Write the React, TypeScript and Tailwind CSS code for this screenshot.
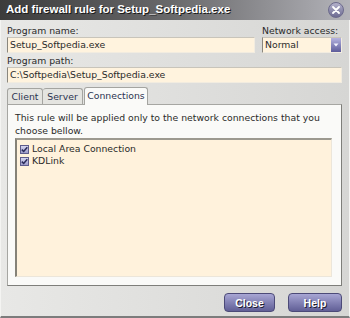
export default function App() {
  const body = { fontFamily: '"DejaVu Sans", Verdana, sans-serif' };
  const bold = { fontFamily: '"Liberation Sans", Arial, sans-serif' };

  return (
    <div
      className="flex h-[318px] w-[350px] flex-col overflow-hidden bg-gradient-to-r from-[#e8e8e6] to-[#d6d6d4] text-[9.3px] leading-[12px] text-[#2a2a2a]"
      style={body}
    >
      {/* title bar */}
      <div className="flex h-[20px] shrink-0 items-center justify-between bg-gradient-to-r from-[#3c3c3c] via-[#6a6a6c] to-[#b4b4ba] pl-[6px] pr-[6px]">
        <span
          className="text-[11.5px] font-bold leading-none text-white [text-shadow:1px_1px_0_#1a1a1a]"
          style={bold}
        >
          Add firewall rule for Setup_Softpedia.exe
        </span>
        <span className="flex h-[16px] w-[16px] items-center justify-center rounded-full border border-[#6c6a8c] bg-gradient-to-b from-[#b4b2cc] to-[#6e6c92]">
          <svg width={8} height={8} viewBox="0 0 8 8">
            <path d="M1 1l6 6M7 1l-6 6" stroke="white" strokeWidth={1.8} strokeLinecap="round" />
          </svg>
        </span>
      </div>

      <div className="flex min-h-0 flex-1 flex-col border-x border-b-2 border-x-[#f4f4f2] border-b-[#7c7c7c] pl-[6px] pr-[7px]">
        {/* program name + network access */}
        <div className="mt-[5px] flex gap-[7px]">
          <div className="flex flex-1 flex-col">
            <span className="h-[12px]">Program name:</span>
            <div className="flex h-[16px] items-center border border-[#f2ece0] border-l-[#8a877e] border-t-[#c8c4ba] bg-[#fff3de] pl-[2px]">
              Setup_Softpedia.exe
            </div>
          </div>
          <div className="flex w-[80px] flex-col">
            <span className="h-[12px]">Network access:</span>
            <div className="flex h-[16px] items-stretch border border-[#f2ece0] border-l-[#8a877e] border-t-[#c8c4ba] bg-[#fff3de]">
              <span className="flex flex-1 items-center pl-[2px]">Normal</span>
              <span className="flex w-[10px] items-center justify-center bg-gradient-to-b from-[#b6b4e0] to-[#5e5c9a]">
                <svg width={6} height={4} viewBox="0 0 6 4">
                  <path d="M0.5 0.5h5L3 3.5z" fill="#f4f4ff" />
                </svg>
              </span>
            </div>
          </div>
        </div>

        {/* program path */}
        <span className="mt-[2px] h-[12px]">Program path:</span>
        <div className="flex h-[16px] items-center border border-[#f2ece0] border-l-[#8a877e] border-t-[#c8c4ba] bg-[#fff3de] pl-[2px]">
          C:\Softpedia\Setup_Softpedia.exe
        </div>

        {/* tabs */}
        <div className="mt-[4px] flex items-end">
          <div className="flex h-[16px] w-[36px] items-center justify-center rounded-t-[3px] border border-b-0 border-[#a4a4a0] bg-[#e4e4e0] text-[#2c3350]">
            Client
          </div>
          <div className="flex h-[16px] w-[40px] items-center justify-center rounded-t-[3px] border border-b-0 border-l-0 border-[#a4a4a0] bg-[#e4e4e0] text-[#2c3350]">
            Server
          </div>
          <div className="relative z-10 -mb-px ml-px flex h-[18px] w-[64px] items-center justify-center rounded-t-[3px] border border-b-0 border-[#a4a4a0] bg-[#fafaf8] pb-[2px] text-[#2c3350]">
            Connections
          </div>
        </div>

        {/* tab panel */}
        <div className="flex h-[182px] flex-col border border-[#a6a6a2] border-b-[#7e7e7a] border-r-[#7e7e7a] bg-[#fafaf8] pb-[8px] pl-[7px] pr-[9px] pt-[6px] leading-[13px]">
          <p>This rule will be applied only to the network connections that you</p>
          <p>choose bellow.</p>
          <div className="mt-px flex flex-1 flex-col border border-[#ece6da] border-l-2 border-t-2 border-l-[#858278] border-t-[#9c998f] bg-[#fff2dc] pl-[3px] pt-[3px] leading-[12px]">
            {["Local Area Connection", "KDLink"].map((name) => (
              <div key={name} className="flex h-[12px] items-center gap-[3px]">
                <span className="flex h-[9px] w-[9px] items-center justify-center border border-[#5e5c8c] bg-gradient-to-b from-[#d6d6f0] to-[#9c9ac8]">
                  <svg width={7} height={7} viewBox="0 0 7 7">
                    <path d="M0.8 3.6l1.9 1.9L6.3 1.2" stroke="#2a2a5a" strokeWidth={1.5} fill="none" />
                  </svg>
                </span>
                <span>{name}</span>
              </div>
            ))}
          </div>
        </div>

        {/* buttons */}
        <div className="mt-[7px] flex justify-end gap-[13px]">
          {["Close", "Help"].map((label) => (
            <button
              key={label}
              type="button"
              className={`flex h-[19px] items-center justify-center rounded-[4px] border border-[#4c4a78] bg-gradient-to-b from-[#a8a6d4] to-[#615f96] text-[10.5px] font-bold text-white [text-shadow:1px_1px_0_#1c1c30] ${label === "Close" ? "w-[51px]" : "w-[54px]"}`}
              style={bold}
            >
              {label}
            </button>
          ))}
        </div>
      </div>
    </div>
  );
}
